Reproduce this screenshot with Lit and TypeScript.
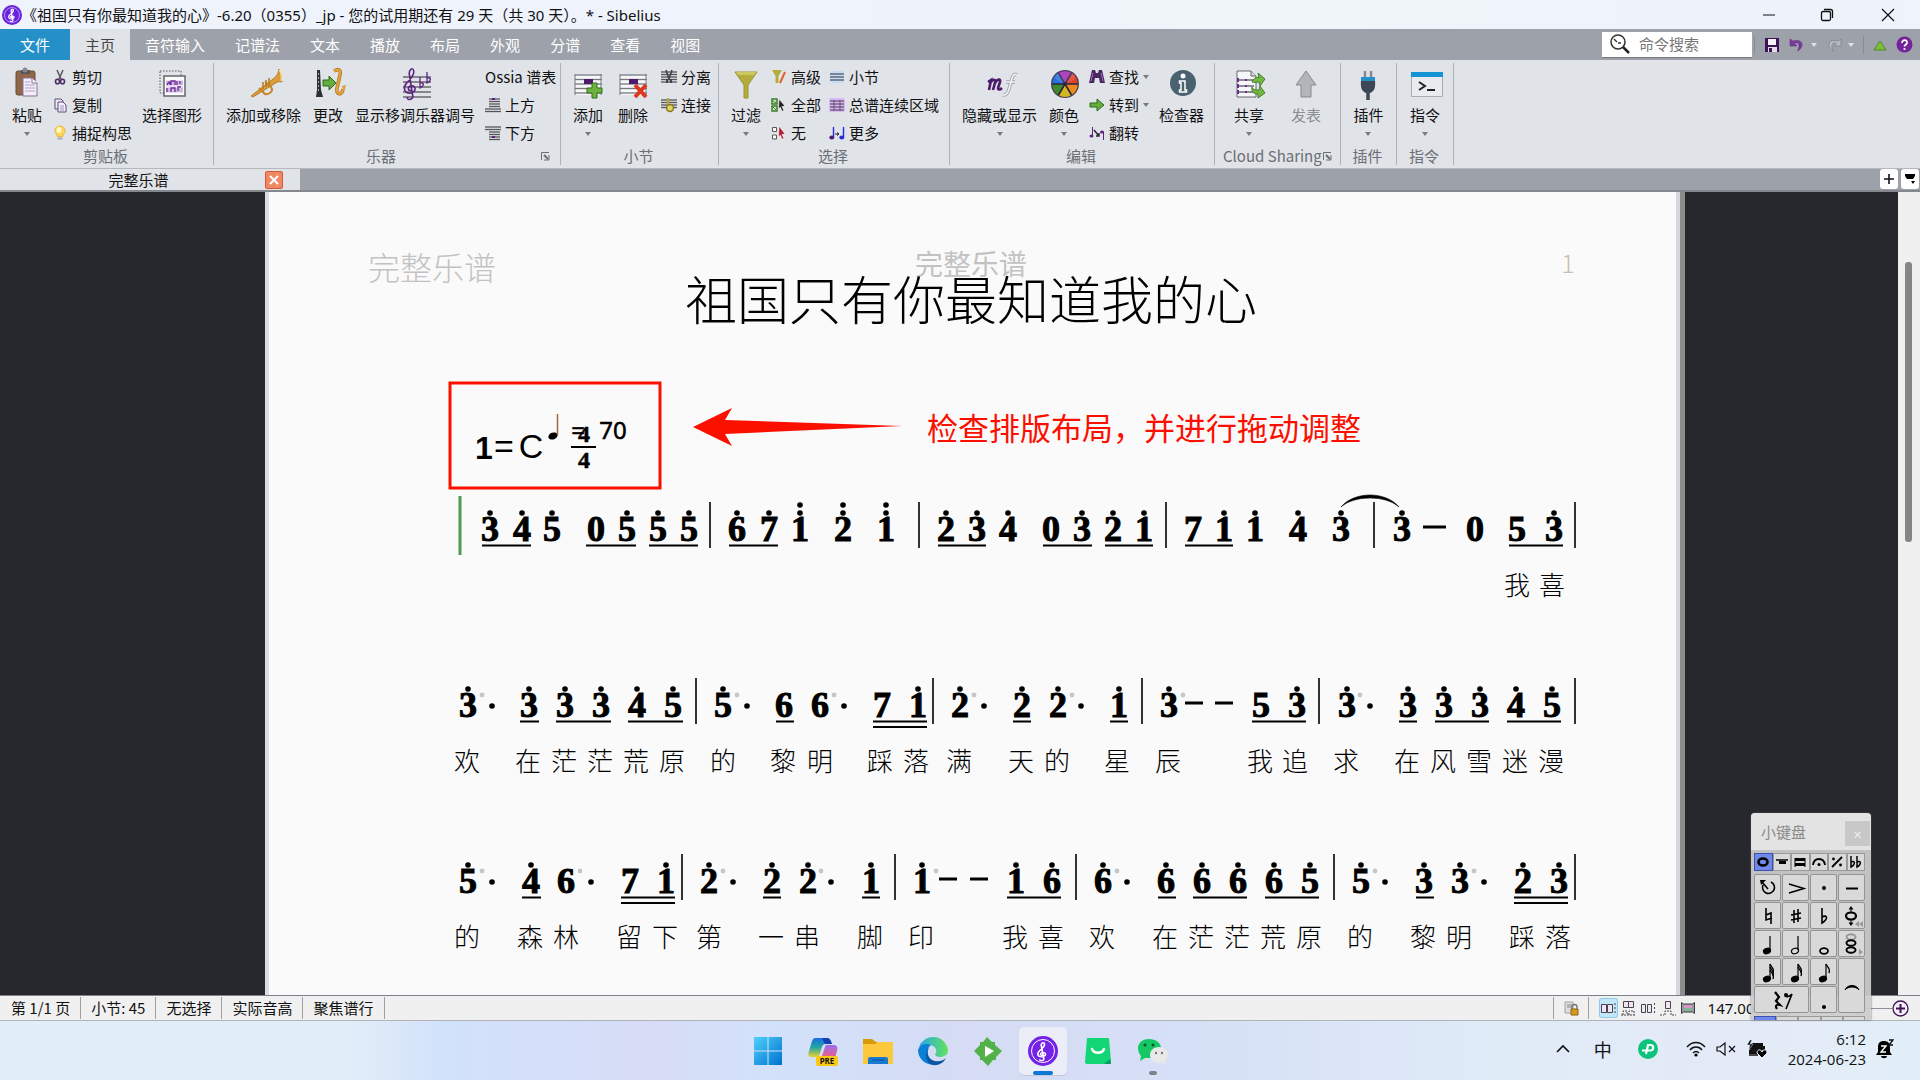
import { LitElement, html, svg, css, nothing } from "lit";
import type { TemplateResult } from "lit";
import { customElement, state } from "lit/decorators.js";
import { classMap } from "lit/directives/class-map.js";

const CLEF =
  "M10 30C6 30 6 25 10 24C15 23 17 31 10 33C2 34 1 26 5 21C9 16 14 12 13 6C12 1 8 4 8 9L12 37C12 42 5 42 6 38";

const icon = (w: number, h: number, body: unknown) =>
  html`<svg width=${w} height=${h} viewBox="0 0 ${w} ${h}" aria-hidden="true">${body}</svg>`;

const staff = (x: number, y: number, w: number, n: number, gap: number, color = "#55565c") =>
  Array.from({ length: n }, (_, i) => svg`<path d="M${x} ${y + i * gap}h${w}" stroke=${color} stroke-width="1.3" />`);

const plus = svg`<path d="M19 16h5v5h5v5h-5v5h-5v-5h-5v-5h5z" fill="#6fb23c" stroke="#2f6f1d" />`;

const ICONS: Record<string, TemplateResult> = {
  paste: icon(28, 32, svg`
    <rect x="3" y="4" width="19" height="24" rx="2" fill="#8f6748" stroke="#6b4a33" />
    <path d="M8 3h9v4H8z" fill="#55555c" /><circle cx="12" cy="3" r="2.5" fill="#88888f" />
    <path d="M10 11h9l5 5v13H10z" fill="#f2edf8" stroke="#8573a0" />
    <path d="M19 11v5h5" fill="#fff" stroke="#8573a0" />
    <path d="M12 15h5M12 18h10M12 21h10M12 24h10" stroke="#b49fc8" />`),
  cut: icon(16, 16, svg`
    <path d="M5 1l4 9M11 1L7 10" stroke="#55555c" stroke-width="1.5" />
    <ellipse cx="5.5" cy="12.5" rx="2" ry="2.3" fill="none" stroke="#4d2a63" stroke-width="1.6" />
    <ellipse cx="10.5" cy="12.5" rx="2" ry="2.3" fill="none" stroke="#4d2a63" stroke-width="1.6" />`),
  copy: icon(16, 16, svg`
    <path d="M3 2h6l2 2v8H3z" fill="#efeaf5" stroke="#5d4a78" />
    <path d="M6 5h5l3 3v7H6z" fill="#f6f2fb" stroke="#5d4a78" />
    <path d="M8 9h4M8 11h4M8 13h4" stroke="#8a78a8" stroke-width=".8" />`),
  idea: icon(16, 16, svg`
    <path d="M8 1a5 5 0 0 1 5 5c0 2-2 3-2.300 5.500H5.300C5 9 3 8 3 6a5 5 0 0 1 5-5z" fill="#fbd75a" stroke="#eeb53c" />
    <ellipse cx="7" cy="5" rx="2.500" ry="3" fill="#fff6c6" /><path d="M5.500 12.500h5v2h-5z" fill="#a9a9b0" />`),
  graphic: icon(30, 32, svg`
    <rect x="3" y="4" width="21" height="22" fill="none" stroke="#55565c" stroke-dasharray="1.500 1.500" />
    <rect x="7" y="9" width="21" height="20" fill="#fafafa" stroke="#65666c" stroke-width="1.500" />
    <rect x="9" y="13" width="17" height="13" fill="#e9dcf4" />
    <path d="M9 15h17M9 17h17M9 22h17M9 24h17" stroke="#a883c4" stroke-width=".8" />
    <path d="M10 18c2-4 3-4 3 0M14 18v-4h4v4M20 18v-4M23 17v-3M10 25v-4M14 25v-4h4v4M21 24v-4h3" stroke="#6b2f92" stroke-width="1.300" fill="none" />`),
  trumpet: icon(34, 32, svg`
    <path d="M2 29L24 12c4-3 5-5 6-10l3 13c-3-1-5 0-8 2L4 30z" fill="#dc9c38" stroke="#a96d17" stroke-width=".8" />
    <path d="M10 21l6 6c4 1 9-3 6-7l-6-5" fill="none" stroke="#c58524" stroke-width="2" />
    <path d="M14 15v7M17 13v7M20 11v7" stroke="#b5781e" stroke-width="1.500" />
    <path d="M30 3c2 2 3 8 2 11" stroke="#f6d48c" stroke-width="1.600" fill="none" />`),
  change: icon(34, 32, svg`
    <path d="M4 3h3l1 20 2 7H3l1-7z" fill="#2e2f34" /><path d="M5.500 6v19" stroke="#a5a6ac" stroke-dasharray="2 2" />
    <path d="M10 13h6V9l7 7-7 7v-4h-6z" fill="#67ad3d" stroke="#2d6b1c" />
    <path d="M21 4c6-3 7 0 6 4l-3 13c-1 7 5 8 6 1" fill="none" stroke="#b0721a" stroke-width="3.500" />
    <path d="M21 4c6-3 7 0 6 4l-3 13c-1 7 5 8 6 1" fill="none" stroke="#e5a63e" stroke-width="2" />
    <path d="M29 19l4-1-2 7z" fill="#dc9c38" />`),
  clef: icon(34, 36, svg`
    ${staff(3, 10, 28, 5, 5)}
    <path d=${CLEF} transform="translate(2 -1) scale(.9 .82)" fill="none" stroke="#5e2380" stroke-width="1.800" />
    <path d="M20 10v11c4-2 5-6 0-5M27 5v11c4-2 5-6 0-5" fill="none" stroke="#5e2380" stroke-width="1.300" />`),
  above: icon(16, 16, svg`${staff(4, 2, 11, 4, 2.5)}${staff(0, 12, 16, 2, 2.5)}<path d="M7 1h3v2H7z" fill="#5e2380" />`),
  below: icon(16, 16, svg`${staff(0, 2, 16, 2, 2.5)}${staff(4, 7, 11, 4, 2.5)}<path d="M7 11h3v2H7z" fill="#5e2380" />`),
  barAdd: icon(32, 32, svg`<path d="M2 7h27v21H2z" fill="#f6f6f8" />${staff(2, 8, 27, 5, 4.5, "#75767c")}<path d="M2 7v21M28 7v21" stroke="#75767c" /><path d="M11 12h9v5h-9z" fill="#4c1a6c" />${plus}`),
  barDel: icon(32, 32, svg`<path d="M2 7h27v21H2z" fill="#f6f6f8" />${staff(2, 8, 27, 5, 4.5, "#75767c")}<path d="M2 7v21M28 7v21" stroke="#75767c" /><path d="M11 12h9v5h-9z" fill="#4c1a6c" /><path d="M17 18l11 12M28 18L17 30" stroke="#dc3820" stroke-width="4" />`),
  split: icon(16, 16, svg`${staff(0, 3, 16, 5, 2.5)}<path d="M5 1l3 9 3-9" stroke="#44454b" stroke-width="1.600" fill="none" /><path d="M6 10v4M10 10v4" stroke="#44454b" stroke-width="2" />`),
  join: icon(16, 16, svg`${staff(0, 3, 16, 4, 2.5)}<path d="M7 1v8" stroke="#b9a63a" stroke-width="2.500" /><circle cx="9" cy="11" r="3.500" fill="#ded06a" stroke="#8b7a1d" stroke-width="1.500" />`),
  filter: icon(28, 32, svg`<path d="M3 5h22L16 18v13h-4V18z" fill="#b4ad3e" stroke="#9a9330" /><path d="M4 5h20l-2 3H6z" fill="#cec95e" />`),
  advanced: icon(16, 16, svg`<path d="M1 1h10L7.500 7v7h-3V7z" fill="#b4ad3e" /><path d="M14 3L9 14" stroke="#e2602b" stroke-width="2" />`),
  all: icon(16, 16, svg`<path d="M1 2h5v5H1zM1 9h5v5H1z" fill="#cfe8c2" stroke="#3b7f2b" stroke-width="1.500" /><path d="M8 2l6 7-3 .5 2 4-2 .8-1.600-4L7.500 12z" fill="#222" stroke="#fff" stroke-width=".6" /><path d="M2 10l3 3M2 4l3 2" stroke="#3b7f2b" />`),
  none: icon(16, 16, svg`<path d="M1.500 2.500h4v4h-4zM1.500 10h4v4h-4z" fill="#fff" stroke="#55565c" /><path d="M8 1l6 8-3 .5 2 4-2 .8-1.600-4L7.500 12z" fill="#b01d32" stroke="#fff" stroke-width=".6" />`),
  bar: icon(16, 16, svg`<rect x="1" y="2" width="14" height="12" rx="2" fill="#c4dcfa" />${staff(1, 5, 14, 3, 3)}`),
  system: icon(16, 16, svg`<rect x="0" y="1" width="16" height="14" rx="2" fill="#d9b9f2" />${staff(1, 4, 14, 4, 3, "#6b5478")}<path d="M5 3v11M11 3v11" stroke="#6b5478" />`),
  more: icon(16, 16, svg`<path d="M4.500 12V2M14.500 12V2" stroke="#2a2ae0" stroke-width="1.400" /><ellipse cx="2.800" cy="12.500" rx="2.500" ry="2" fill="#4d1d78" /><ellipse cx="12.800" cy="12.500" rx="2.500" ry="2" fill="#2a2ae0" /><path d="M6 9h4M8 7.500L10 9 8 10.500" stroke="#222" fill="none" />`),
  hide: icon(36, 32, svg`
    <path d="M3 15l3-2-2 10M6 15c3-4 5-2 4 1l-2 7M10 16c3-5 6-4 5-1l-2 6c0 2 2 2 4 0" fill="none" stroke="#4c1a6c" stroke-width="2.600" />
    <path d="M18 28c5 1 6-6 8-13 1-6 3-9 6-7M21 15h9" fill="none" stroke="#a5a6ac" stroke-width="3.500" /><path d="M18 28c5 1 6-6 8-13 1-6 3-9 6-7M21 15h9" fill="none" stroke="#f0f0f3" stroke-width="1.600" />`),
  color: icon(32, 32, svg`
    <circle cx="16" cy="17" r="14" fill="#4a3f58" />
    <path d="M16 17L9.500 6A12.700 12.700 0 0 1 22.500 6z" fill="#a32bb8" /><path d="M16 17L22.500 6A12.700 12.700 0 0 1 28.700 17z" fill="#e0402c" />
    <path d="M16 17h12.700a12.700 12.700 0 0 1-6.200 11z" fill="#ee8a1b" /><path d="M16 17l6.500 11a12.700 12.700 0 0 1-13 0z" fill="#d2b81c" />
    <path d="M16 17L9.500 28A12.700 12.700 0 0 1 3.300 17z" fill="#3c8a2c" /><path d="M16 17H3.300A12.700 12.700 0 0 1 9.500 6z" fill="#2a6fe0" />
    <path d="M9.500 6l13 22M22.500 6l-13 22M3 17h26" stroke="#2d2340" stroke-width="1.600" />
    <ellipse cx="16" cy="10" rx="10" ry="5.500" fill="#fff" opacity=".12" />`),
  find: icon(16, 16, svg`<path d="M3 1h3l1 3h2l1-3h3l3 13h-5l-1-5H6l-1 5H0z" fill="#4c2563" /><path d="M2 12l2-8M12 4l2 8" stroke="#9a78b4" />`),
  goto: icon(16, 16, svg`<path d="M1 6h7V2l7 6-7 6v-4H1z" fill="#67ad3d" stroke="#2d6b1c" />`),
  flip: icon(16, 16, svg`<path d="M3.500 2v9M14.500 7v8" stroke="#5e2380" /><ellipse cx="2.500" cy="11" rx="2" ry="1.600" fill="#5e2380" /><ellipse cx="13" cy="7" rx="2" ry="1.600" fill="#5e2380" /><path d="M5 5l5 6M10 8v3H7" stroke="#222" fill="none" stroke-width="1.400" />`),
  inspector: icon(32, 32, svg`<circle cx="16" cy="16" r="13" fill="#4a6270" /><circle cx="16" cy="9" r="2.500" fill="#fff" /><path d="M12.500 14h5.500v9h1.500v2h-7v-2h1.500v-7h-1.500z" fill="#4a6270" stroke="#fff" stroke-width="1.500" />`),
  share: icon(34, 32, svg`
    <path d="M3 4h14l5 5v21H3z" fill="#f7f6fa" stroke="#66676e" /><path d="M17 4v5h5" fill="#ddd" stroke="#66676e" />
    <path d="M5 13h15M5 19h15M5 25h15" stroke="#8b8c94" stroke-width="2" /><path d="M4 11v4M4 17v4M4 23v4M12 12v2M12 18v2M12 24v2" stroke="#6b2a92" stroke-width="2" />
    <path d="M18 15c2-5 5-5 7-4l-1-5 7 6-5 7-1-4c-3 0-5 1-7 0z" fill="#72b840" stroke="#2d6b1c" stroke-width=".8" />
    <path d="M18 20c1 3 4 3 7 3l1-4 5 7-7 5v-4c-4 0-7-2-6-7z" fill="#72b840" stroke="#2d6b1c" stroke-width=".8" />`),
  publish: icon(28, 32, svg`<path d="M14 4l10 14h-5v12H9V18H4z" fill="#b4b5b9" stroke="#88898e" />`),
  plugin: icon(24, 34, svg`<path d="M9 4v7M15 4v7" stroke="#8a8b92" stroke-width="2.500" /><path d="M5 10h14v4H5z" fill="#2590c8" /><path d="M5 14h14c1 8-2 11-5 12h-4c-3-1-6-4-5-12z" fill="#3c4654" /><path d="M12 25v8" stroke="#3c4654" stroke-width="3.500" />`),
  command: icon(34, 32, svg`<path d="M1.500 5.500h31v24h-31z" fill="#e9ebee" stroke="#a9acb2" /><path d="M1 5h32v5H1z" fill="#1494d4" /><path d="M9 15l6 4-6 4M17 23h8" fill="none" stroke="#222" stroke-width="2" />`),
  launcher: icon(10, 10, svg`<path d="M1.500 9V1.500H9M9 4v5H4" fill="none" stroke="#6b6e75" /><path d="M4 4l4 4" stroke="#6b6e75" stroke-width="2" />`),
  search: icon(22, 22, svg`<circle cx="9" cy="9" r="7" fill="none" stroke="#333" stroke-width="1.500" /><path d="M14 14l6 6" stroke="#222" stroke-width="2.500" /><path d="M5 6l3 3M9 10h3" stroke="#333" stroke-width="1.400" />`),
  save: icon(16, 16, svg`<path d="M1 1h14v14H1z" fill="#3d1455" /><path d="M4 2h8v6H4z" fill="#f4f0f8" /><path d="M4 10h9v5H4z" fill="#e3dcea" /><path d="M5 11h3v4H5z" fill="#3d1455" />`),
  undo: icon(16, 16, svg`<path d="M1 2v7h7L5.500 6.500C9 4 12 8 8.500 14 16 10 14 1 4 4z" fill="#7a3a9c" stroke="#5e2380" stroke-width=".5" />`),
  redo: icon(16, 16, svg`<path d="M15 2v7H8l2.500-2.500C7 4 4 8 7.500 14 0 10 2 1 12 4z" fill="#b9bbc1" stroke="#7f828a" stroke-width=".8" />`),
  up: icon(14, 14, svg`<path d="M7 3l6 9H1z" fill="#7cbf3f" stroke="#4c8a1f" />`),
  help: icon(17, 17, svg`<circle cx="8.500" cy="8.500" r="8" fill="#74249a" /><path d="M6 7c0-4 5.500-3.500 5 0-.3 1.500-2.500 1.500-2.500 3.500" fill="none" stroke="#fff" stroke-width="1.800" /><circle cx="8.500" cy="13" r="1.100" fill="#fff" />`),
  appLogo: icon(20, 20, svg`<circle cx="10" cy="10" r="10" fill="#6a22dd" /><circle cx="10" cy="10" r="7.500" fill="none" stroke="#c9a8fa" stroke-width=".8" /><path d=${CLEF} transform="translate(5.500 3) scale(.45 .33)" fill="none" stroke="#fff" stroke-width="3" />`),
  minimize: icon(14, 14, svg`<path d="M1 7h12" stroke="#111" />`),
  restore: icon(14, 14, svg`<rect x="1.500" y="3.500" width="9" height="9" rx="1.500" fill="none" stroke="#111" stroke-width="1.300" /><path d="M4 1.500h6.500a2 2 0 0 1 2 2V10" fill="none" stroke="#111" stroke-width="1.300" />`),
  close: icon(14, 14, svg`<path d="M1 1l12 12M13 1L1 13" stroke="#111" stroke-width="1.200" />`),
  lock: icon(16, 16, svg`<path d="M2 2h8v11H2z" fill="#dcdce2" stroke="#a0a0a8" /><path d="M4 5h5M4 7h5" stroke="#888" /><path d="M9 9V7a2.500 2.500 0 0 1 5 0v2" fill="none" stroke="#777" stroke-width="1.400" /><path d="M8 9h7v6H8z" fill="#d99a1c" stroke="#8a6213" />`),
};

const VIEW_ICONS = [
  icon(16, 16, svg`<path d="M1.500 4.500h5v8h-5zM7.500 4.500h5v8h-5z" fill="#f3e4f5" stroke="#44454b" /><path d="M15 3v11" stroke="#44454b" stroke-dasharray="2 2" />`),
  icon(16, 16, svg`<path d="M3.500 1.500h5v6h-5zM8.500 1.500h5v6h-5z" fill="#f3e4f5" stroke="#44454b" /><path d="M3 15v-4h4v4M9 15v-4h5v4M1 15h14" fill="none" stroke="#44454b" stroke-dasharray="2 1" />`),
  icon(16, 16, svg`<path d="M1.500 4.500h4v8h-4zM7.500 4.500h4v8h-4z" fill="#f3e4f5" stroke="#44454b" /><path d="M14.500 3v11" stroke="#44454b" stroke-dasharray="2 2" />`),
  icon(16, 16, svg`<path d="M5.500 1.500h5v7h-5z" fill="#f3e4f5" stroke="#44454b" /><path d="M5 15v-4h6v4M0 15h4M12 15h4" fill="none" stroke="#44454b" stroke-dasharray="2 1" />`),
  icon(16, 16, svg`<path d="M1.500 2.500l2 1.500h9l2-1.500v11l-2-1.500h-9l-2 1.500z" fill="#9a9aa2" stroke="#3a3b40" /><path d="M4 5h8v3H4z" fill="#d895c8" /><path d="M4 8h8v3H4z" fill="#7fb79a" />`),
];

const note = (x: number, filled: boolean, flags: number) => svg`
  <ellipse cx=${x} cy="20" rx="3.600" ry="2.600" transform="rotate(-20 ${x} 20)" fill=${filled ? "#000" : "none"} stroke="#000" stroke-width="1.200" />
  <path d="M${x + 3} 19V5" stroke="#000" stroke-width="1.200" />
  ${Array.from({ length: flags }, (_, i) => svg`<path d="M${x + 3} ${5 + i * 3}c1 3 5 4 3 9" fill="none" stroke="#000" stroke-width="1.300" />`)}`;

const whole = (x: number, y: number, c = "#000") =>
  svg`<ellipse cx=${x} cy=${y} rx="4.500" ry="2.800" fill="none" stroke=${c} stroke-width="2" />`;

const PAD_TABS: [string, TemplateResult][] = [
  ["常用音符", icon(16, 16, svg`<ellipse cx="8" cy="8" rx="4.500" ry="3.500" fill="none" stroke="#000" stroke-width="2.600" />`)],
  ["更多音符", icon(16, 16, svg`<path d="M2 6h12M5 8h7" stroke="#000" stroke-width="1.500" /><path d="M5 7h7v3H5z" />`)],
  ["符杠", icon(16, 16, svg`<path d="M3 13V4M13 13V4" stroke="#000" /><path d="M3 4h10v3H3zM3 9h10v3H3z" />`)],
  ["奏法", icon(16, 16, svg`<path d="M2 11c1-8 11-8 12 0" fill="none" stroke="#000" stroke-width="1.800" /><circle cx="8" cy="10.500" r="1.500" />`)],
  ["爵士奏法", icon(16, 16, svg`<path d="M3 13L13 3" stroke="#000" stroke-width="1.800" /><circle cx="4.500" cy="5" r="1.400" /><circle cx="11.500" cy="11" r="1.400" />`)],
  ["变音记号", icon(16, 16, svg`<path d="M3 2v11c4-2 5-7 0-5M9 2v11c4-2 5-7 0-5" fill="none" stroke="#000" stroke-width="1.500" />`)],
];

const PAD_KEYS: { name: string; cls?: string; art: TemplateResult }[] = [
  { name: "返回", art: icon(26, 26, svg`<path d="M16 7a6 6 0 1 1-8 3M13 14L7 7" fill="none" stroke="#000" stroke-width="1.600" /><path d="M5 5h6l-5 5z" />`) },
  { name: "重音", art: icon(26, 26, svg`<path d="M6 9l15 4.500L6 18" fill="none" stroke="#000" stroke-width="1.500" />`) },
  { name: "断奏", art: icon(26, 26, svg`<circle cx="13" cy="13" r="2" />`) },
  { name: "保持音", art: icon(26, 26, svg`<path d="M7 13.500h12" stroke="#000" stroke-width="2" />`) },
  { name: "还原", art: icon(26, 26, svg`<path d="M11 5v12l6-2M16 21V10l-5 2" fill="none" stroke="#000" stroke-width="1.600" />`) },
  { name: "升号", art: icon(26, 26, svg`<path d="M11 7v13M15 6v13M8 12l10-2M8 17l10-2" fill="none" stroke="#000" stroke-width="1.600" />`) },
  { name: "降号", art: icon(26, 26, svg`<path d="M11 5v15c6-4 6-9 0-6" fill="none" stroke="#000" stroke-width="1.600" />`) },
  { name: "移动音符", art: icon(26, 26, svg`<ellipse cx="12" cy="13" rx="5" ry="3.500" fill="none" stroke="#000" stroke-width="2.200" /><path d="M12 9V5M12 17v4" stroke="#000" /><path d="M9.500 6.500L12 3l2.500 3.500zM9.500 19.500L12 23l2.500-3.500z" /><path d="M20 18v6l-4-3zM24 18v6l-4-3z" fill="#999" />`) },
  { name: "四分音符", art: icon(26, 26, note(12, true, 0)) },
  { name: "二分音符", art: icon(26, 26, note(12, false, 0)) },
  { name: "全音符", art: icon(26, 26, svg`<ellipse cx="13" cy="20" rx="4" ry="2.800" fill="none" stroke="#000" stroke-width="1.800" />`) },
  { name: "和弦", art: icon(26, 26, svg`${whole(12, 6, "#999")}${whole(12, 12)}${whole(12, 19)}<path d="M20 18l4 3-4 3z" fill="#999" />`) },
  { name: "三十二分音符", art: icon(26, 26, note(12, true, 3)) },
  { name: "十六分音符", art: icon(26, 26, note(12, true, 2)) },
  { name: "八分音符", art: icon(26, 26, note(12, true, 1)) },
  { name: "连音线", cls: "tall", art: icon(26, 26, svg`<path d="M6 17c2-6 12-6 14 0-3-4-11-4-14 0z" stroke="#000" />`) },
  { name: "休止符", cls: "broad", art: icon(34, 26, svg`<path d="M10 5l4 5-3 4 4 4c-4-1-5 1-3 4" fill="none" stroke="#000" stroke-width="2.200" /><circle cx="21" cy="8" r="2" /><path d="M20 9c3 2 5 0 7-2l-6 15" fill="none" stroke="#000" stroke-width="1.600" />`) },
  { name: "附点", art: icon(26, 26, svg`<circle cx="13" cy="20" r="2" />`) },
];

type Big = { kind: "big"; icon: string; label: string; menu?: boolean; disabled?: boolean };
type Small = { kind: "small"; items: { icon?: string; label: string; menu?: boolean }[] };
type Group = { label: string; cls?: string; launcher?: boolean; parts: (Big | Small)[] };

const big = (iconName: string, label: string, menu = false, disabled = false): Big =>
  ({ kind: "big", icon: iconName, label, menu, disabled });

const GROUPS: Group[] = [
  { label: "剪贴板", parts: [
    big("paste", "粘贴", true),
    { kind: "small", items: [{ icon: "cut", label: "剪切" }, { icon: "copy", label: "复制" }, { icon: "idea", label: "捕捉构思" }] },
    big("graphic", "选择图形")] },
  { label: "乐器", launcher: true, parts: [
    big("trumpet", "添加或移除"), big("change", "更改"), big("clef", "显示移调乐器调号"),
    { kind: "small", items: [{ label: "Ossia 谱表" }, { icon: "above", label: "上方" }, { icon: "below", label: "下方" }] }] },
  { label: "小节", cls: "roomy", parts: [
    big("barAdd", "添加", true), big("barDel", "删除"),
    { kind: "small", items: [{ icon: "split", label: "分离" }, { icon: "join", label: "连接" }] }] },
  { label: "选择", parts: [
    big("filter", "过滤", true),
    { kind: "small", items: [{ icon: "advanced", label: "高级" }, { icon: "all", label: "全部" }, { icon: "none", label: "无" }] },
    { kind: "small", items: [{ icon: "bar", label: "小节" }, { icon: "system", label: "总谱连续区域" }, { icon: "more", label: "更多" }] }] },
  { label: "编辑", parts: [
    big("hide", "隐藏或显示", true), big("color", "颜色", true),
    { kind: "small", items: [{ icon: "find", label: "查找", menu: true }, { icon: "goto", label: "转到", menu: true }, { icon: "flip", label: "翻转" }] },
    big("inspector", "检查器")] },
  { label: "Cloud Sharing", cls: "wide", launcher: true, parts: [big("share", "共享", true), big("publish", "发表", false, true)] },
  { label: "插件", cls: "single", parts: [big("plugin", "插件", true)] },
  { label: "指令", cls: "single", parts: [big("command", "指令", true)] },
];

const TABS = ["文件", "主页", "音符输入", "记谱法", "文本", "播放", "布局", "外观", "分谱", "查看", "视图"];

/* Score data: [x, digit, octave dots]; dots are augmentation dots, dashes are held beats. */
type System = {
  base: number;
  notes: [number, string, number?][];
  dots: number[];
  ghosts: number[];
  dashes: [number, number][];
  bars: number[];
  beams: [number, number, number?][];
  lyrics: [number, string][];
};

const SYSTEMS: System[] = [
  {
    base: 541,
    notes: [[490, "3", 1], [522, "4", 1], [552, "5", 1], [596, "0"], [627, "5", 1], [658, "5", 1], [689, "5", 1],
      [737, "6", 1], [769, "7", 1], [800, "1", 2], [843, "2", 2], [886, "1", 2],
      [946, "2", 1], [977, "3", 1], [1008, "4", 1], [1051, "0"], [1082, "3", 1], [1113, "2", 1], [1144, "1", 1],
      [1193, "7"], [1224, "1", 1], [1255, "1", 1], [1298, "4", 1], [1341, "3", 1],
      [1402, "3", 1], [1475, "0"], [1517, "5"], [1554, "3", 1]],
    dots: [], ghosts: [], dashes: [[1423, 1446]],
    bars: [710, 919, 1166, 1374, 1575],
    beams: [[482, 531], [586, 636], [649, 698], [729, 778], [938, 986], [1043, 1092], [1105, 1153], [1185, 1233], [1509, 1563]],
    lyrics: [[1517, "我"], [1552, "喜"]],
  },
  {
    base: 717,
    notes: [[468, "3", 1], [529, "3", 1], [565, "3", 1], [601, "3", 1], [637, "4", 1], [673, "5", 1],
      [723, "5", 1], [784, "6"], [820, "6"], [882, "7"], [918, "1", 1],
      [960, "2", 1], [1022, "2", 1], [1058, "2", 1], [1119, "1", 1],
      [1169, "3", 1], [1261, "5"], [1297, "3", 1],
      [1347, "3", 1], [1408, "3", 1], [1444, "3", 1], [1480, "3", 1], [1516, "4", 1], [1552, "5", 1]],
    dots: [492, 747, 844, 984, 1081, 1370],
    ghosts: [482, 737, 834, 974, 1072, 1183, 1360],
    dashes: [[1185, 1203], [1215, 1233]],
    bars: [696, 933, 1142, 1319, 1575],
    beams: [[520, 539], [556, 611], [628, 683], [776, 794], [873, 927, 2], [1013, 1031], [1110, 1128], [1252, 1306], [1399, 1417], [1435, 1489], [1507, 1561]],
    lyrics: [[467, "欢"], [528, "在"], [564, "茫"], [600, "茫"], [636, "荒"], [672, "原"], [723, "的"], [783, "黎"], [820, "明"], [880, "踩"], [916, "落"], [959, "满"], [1021, "天"], [1057, "的"], [1117, "星"], [1168, "辰"], [1260, "我"], [1295, "追"], [1346, "求"], [1407, "在"], [1443, "风"], [1479, "雪"], [1515, "迷"], [1551, "漫"]],
  },
  {
    base: 893,
    notes: [[468, "5", 1], [531, "4", 1], [566, "6"], [630, "7"], [666, "1", 1],
      [709, "2", 1], [772, "2", 1], [808, "2", 1], [871, "1", 1],
      [922, "1", 1], [1016, "1", 1], [1052, "6", 1],
      [1103, "6", 1], [1166, "6", 1], [1202, "6", 1], [1238, "6", 1], [1274, "6", 1], [1310, "5", 1],
      [1361, "5", 1], [1424, "3", 1], [1460, "3", 1], [1523, "2", 1], [1559, "3", 1]],
    dots: [492, 591, 733, 831, 1127, 1385, 1484],
    ghosts: [482, 580, 723, 821, 936, 1117, 1375, 1474],
    dashes: [[939, 957], [970, 988]],
    bars: [682, 895, 1076, 1334, 1575],
    beams: [[522, 541], [621, 675, 2], [763, 781], [862, 880], [1007, 1061], [1158, 1176], [1193, 1247], [1265, 1319], [1416, 1434], [1514, 1568, 2]],
    lyrics: [[467, "的"], [530, "森"], [566, "林"], [629, "留"], [665, "下"], [709, "第"], [771, "一"], [807, "串"], [870, "脚"], [921, "印"], [1015, "我"], [1051, "喜"], [1102, "欢"], [1165, "在"], [1201, "茫"], [1237, "茫"], [1273, "荒"], [1309, "原"], [1360, "的"], [1423, "黎"], [1459, "明"], [1522, "踩"], [1558, "落"]],
  },
];

@customElement("score-sheet")
export class ScoreSheet extends LitElement {
  static styles = css`
    :host { display: block; background: #fafafa; }
    svg { display: block; }
    text { font-family: "Noto Sans CJK SC", "Noto Sans", sans-serif; text-anchor: middle; }
    .digit { font: bold 36px "Liberation Serif", serif; stroke: #000; stroke-width: 1px; }
    .lyric { font-size: 26px; font-weight: 300; }
    .title { font-size: 52px; font-weight: 300; }
    .mark { fill: #c2c2c2; font-size: 32px; font-weight: 300; }
    .mark.mid { font-size: 28px; font-weight: 400; }
    .mark.page { font-size: 25px; fill: #c9bdb4; }
    .callout { fill: #fb1000; font-size: 31px; text-anchor: start; }
    .key { font: 34px "Liberation Sans", sans-serif; }
    .key.one { font: bold 32px "Liberation Sans", sans-serif; }
    .tempo { font: 24px "Noto Sans", sans-serif; stroke: #000; stroke-width: .5px; }
    .meter { font: bold 24px "Liberation Serif", serif; stroke: #000; stroke-width: .5px; }
  `;

  private system(s: System) {
    return svg`<g>
      ${s.notes.map(([x, d, n = 0]) => svg`
        <text class="digit" x=${x} y=${s.base}>${d}</text>
        ${Array.from({ length: n }, (_, i) => svg`<circle cx=${x} cy=${s.base - 28 - i * 8} r="2.800" />`)}`)}
      ${s.dots.map((x) => svg`<circle cx=${x} cy=${s.base - 11} r="2.800" />`)}
      ${s.ghosts.map((x) => svg`<circle cx=${x} cy=${s.base - 22} r="2.400" fill="#c6c6c8" />`)}
      ${s.dashes.map(([a, b]) => svg`<path d="M${a} ${s.base - 14}H${b}" stroke="#000" stroke-width="3" />`)}
      ${s.bars.map((x) => svg`<path d="M${x} ${s.base - 39}v46" stroke="#000" stroke-width="1.600" />`)}
      ${s.beams.map(([a, b, n = 1]) => Array.from({ length: n }, (_, i) =>
        svg`<path d="M${a} ${s.base + 4.5 + i * 5.5}H${b}" stroke="#000" stroke-width="2" />`))}
      ${s.lyrics.map(([x, t]) => svg`<text class="lyric" x=${x} y=${s.base + 54}>${t}</text>`)}
    </g>`;
  }

  render() {
    return html`<svg width="1407" height="804" viewBox="269 192 1407 804" role="img" aria-label="祖国只有你最知道我的心">
      <text class="mark" x="432" y="280">完整乐谱</text>
      <text class="mark mid" x="971" y="275">完整乐谱</text>
      <text class="mark page" x="1568" y="273">1</text>
      <text class="title" x="971" y="320">祖国只有你最知道我的心</text>
      <rect x="450" y="383" width="210" height="105" fill="none" stroke="#fb1000" stroke-width="3" />
      <text class="key one" x="484" y="459">1</text>
      <text class="key" x="504" y="458">=</text>
      <text class="key" x="531" y="458">C</text>
      <ellipse cx="553" cy="436" rx="4.800" ry="3.400" transform="rotate(-20 553 436)" />
      <path d="M557.500 435V414" stroke="#9c6a38" stroke-width="1.500" />
      <text class="tempo" x="578" y="439">=</text>
      <text class="meter" x="584" y="442">4</text>
      <path d="M571 447h25" stroke="#000" stroke-width="2" />
      <text class="meter" x="584" y="468">4</text>
      <text class="tempo" x="613" y="439">70</text>
      <path d="M693 427l39-19-7 12 177 6-177 8 7 12z" fill="#fb1000" />
      <text class="callout" x="927" y="440">检查排版布局，并进行拖动调整</text>
      <path d="M460 496v59" stroke="#4f9a54" stroke-width="3" />
      <path d="M1341 507C1354 491 1386 491 1399 507C1386 495 1354 495 1341 507z" stroke="#000" stroke-width=".6" />
      ${SYSTEMS.map((s) => this.system(s))}
    </svg>`;
  }
}

@customElement("note-keypad")
export class NoteKeypad extends LitElement {
  static styles = css`
    :host { display: flex; flex-direction: column; overflow: hidden; border-radius: 4px 4px 0 0; background: rgba(204, 204, 204, 0.94); box-shadow: 0 0 2px #555; }
    header { display: flex; flex: none; align-items: center; justify-content: space-between; height: 37px; padding: 0 1px 0 10px; background: rgba(228, 228, 228, 0.96); color: #8a8a8a; font-size: 15px; }
    header button { width: 25px; height: 25px; margin-top: 4px; padding: 0; border: 0; background: #c8c8c8; color: #eee; font: 15px "Noto Sans", sans-serif; }
    button { box-sizing: border-box; display: flex; align-items: center; justify-content: center; overflow: hidden; }
    .tabs { display: grid; flex: none; grid-template-columns: repeat(6, 1fr); margin: 3px 6px 0 3px; }
    .tabs button { height: 18px; padding: 0; border: 1px solid #999; background: rgba(218, 218, 218, 0.94); }
    .tabs .on { background: #7088ea; border-color: #3d50b0; }
    .keys { display: grid; flex: none; grid-template-columns: repeat(4, 1fr); grid-auto-rows: 27px; gap: 1px; margin: 3px 6px 3px 3px; }
    .keys button { padding: 0; border: 1px solid #949494; border-radius: 2px; background: rgba(218, 218, 218, 0.94); }
    .tall { grid-row: span 2; }
    .broad { grid-column: span 2; }
    .tabs.next { grid-template-columns: repeat(5, 1fr); margin-top: 0; }
    svg { flex: none; }
  `;

  render() {
    return html`
      <header><span>小键盘</span><button aria-label="关闭小键盘">×</button></header>
      <div class="tabs">${PAD_TABS.map(([n, art], i) => html`<button class=${i ? "" : "on"} aria-label=${n}>${art}</button>`)}</div>
      <div class="keys">${PAD_KEYS.map((k) => html`<button class=${k.cls ?? ""} aria-label=${k.name}>${k.art}</button>`)}</div>
      <div class="tabs next">${[1, 2, 3, 4, 5].map((n) => html`<button class=${n > 1 ? "" : "on"} aria-label="声部 ${n}"></button>`)}</div>
    `;
  }
}

const TASKS: { name: string; cls?: string; art: TemplateResult }[] = [
  { name: "开始", art: html`<svg width="30" height="30" viewBox="0 0 30 30"><defs><linearGradient id="w" x1="0" y1="0" x2="1" y2="1"><stop offset="0" stop-color="#4fd0fb" /><stop offset="1" stop-color="#0072cf" /></linearGradient></defs><path d="M1 1h13.500v13.500H1zM15.500 1H29v13.500H15.500zM1 15.500h13.500V29H1zM15.500 15.500H29V29H15.500z" fill="url(#w)" /></svg>` },
  { name: "Copilot", art: html`<svg width="30" height="30" viewBox="0 0 30 30"><defs><linearGradient id="a" x1="0" y1="0" x2="0" y2="1"><stop offset="0" stop-color="#1a6fe0" /><stop offset=".5" stop-color="#23a6a0" /><stop offset="1" stop-color="#f0d02c" /></linearGradient><linearGradient id="b" x1="0" y1="0" x2="0" y2="1"><stop offset="0" stop-color="#9a6cf0" /><stop offset="1" stop-color="#f2607a" /></linearGradient></defs><path d="M7 2h12c3 0 4 3 5 6h-6c-3 0-4 2-5 6l-1 4c-1 2-2 3-4 3H3c-3 0-3-3-2-6L4 5c1-2 2-3 3-3z" fill="url(#a)" /><path d="M14 2h5c3 0 4 3 5 6h-6c-2 0-3-4-4-6z" fill="#1340b8" /><path d="M18 9h8c3 0 4 3 3 6l-2 7H12c3-1 4-11 6-13z" fill="url(#b)" /><rect x="8" y="20" width="22" height="10" rx="2" fill="#fbc811" /><text x="19" y="28" text-anchor="middle" font-family="Noto Sans, sans-serif" font-size="8" font-weight="bold" fill="#111">PRE</text></svg>` },
  { name: "文件资源管理器", art: html`<svg width="30" height="30" viewBox="0 0 30 30"><path d="M0 3h9l4 3h17v8H0z" fill="#d99a0a" /><path d="M0 8h12l3-2h15v21a1 1 0 0 1-1 1H0z" fill="#fdc93c" /><path d="M5 28v-5a2 2 0 0 1 2-2h16a2 2 0 0 1 2 2v5z" fill="#1779cf" /><path d="M9 24h12" stroke="#0b4f94" /></svg>` },
  { name: "Microsoft Edge", art: html`<svg width="30" height="30" viewBox="0 0 30 30"><defs><linearGradient id="e"><stop offset="0" stop-color="#2aa7e8" /><stop offset="1" stop-color="#62e35c" /></linearGradient></defs><path d="M1 11A15 15 0 0 1 30 14c0 5-4 7-8 7-3 0-5-1-5-3 2-1 3-8-6-9-5 0-8 0-10 2z" fill="url(#e)" /><path d="M0 15C1 8 8 7 13 9c-5 3-6 16 9 18A15 15 0 0 1 0 15z" fill="#0a7fd6" /><path d="M12 11c-4 3-4 12 5 14 5 1 9-1 11-3-4 9-20 11-20-3 0-3 1-6 4-8z" fill="#0a55a4" /></svg>` },
  { name: "播放器", art: html`<svg width="30" height="30" viewBox="0 0 30 30"><path d="M14 1l5 5h3v3l7 6-6 6v3h-3l-5 6-6-6H7v-3l-6-6 6-6V6h3z" fill="#52b148" /><path d="M12 10l9 5-9 6z" fill="#fff" /></svg>` },
  { name: "Sibelius", cls: "active", art: html`<svg width="30" height="30" viewBox="0 0 30 30"><circle cx="15" cy="15" r="15" fill="#7322e6" /><circle cx="15" cy="15" r="11.500" fill="none" stroke="#fff" /><path d=${CLEF} transform="translate(8 5) scale(.65 .48)" fill="none" stroke="#fff" stroke-width="2.600" /></svg>` },
  { name: "应用商店", art: html`<svg width="30" height="30" viewBox="0 0 30 30"><path d="M4 2h22l2 24a2 2 0 0 1-2 2H4a2 2 0 0 1-2-2z" fill="#12d576" /><path d="M27 23l1 5h-7z" fill="#0a9a60" /><path d="M9 13c2 5 10 5 12 0" fill="none" stroke="#fff" stroke-width="2.500" stroke-linecap="round" /></svg>` },
  { name: "微信", cls: "running", art: html`<svg width="30" height="30" viewBox="0 0 30 30"><path d="M11 3c7 0 12 4 12 9s-5 10-12 10l-4 0-5 3 1-5C-4 11 2 3 11 3z" fill="#14c963" /><circle cx="7" cy="9" r="1.500" fill="#14532d" /><circle cx="15" cy="9" r="1.500" fill="#14532d" /><path d="M21 11c5 0 9 3 9 8 0 3-2 5-3 6l1 3-4-1c-7 1-12-3-12-8s4-8 9-8z" fill="#e9e9e9" /><circle cx="18" cy="17" r="1.200" fill="#777" /><circle cx="24" cy="17" r="1.200" fill="#777" /></svg>` },
];

@customElement("app-root")
export class AppRoot extends LitElement {
  @state() private tab = "主页";

  static styles = css`
    :host { display: flex; flex-direction: column; height: 100vh; position: relative; overflow: hidden; color: #111; font: 15px/20px "Noto Sans CJK SC", "Noto Sans", sans-serif; }
    * { box-sizing: border-box; }
    button { margin: 0; padding: 0; border: 0; background: none; color: inherit; font: inherit; white-space: nowrap; }
    svg { display: block; flex: none; }

    .titlebar { display: flex; align-items: center; height: 29px; flex: none; padding-left: 2px; background: linear-gradient(90deg, #eef3fc, #eef3fc 45%, #eff5f8 65%, #eef3fc); }
    .titlebar h1 { flex: 1; margin: 0; font-size: 15px; font-weight: 400; font-family: "Noto Sans", "Noto Sans CJK SC", sans-serif; }
    .winbtn { display: grid; place-items: center; width: 58px; height: 28px; }
    .winbtn:last-child { width: 64px; }

    .menubar { display: flex; height: 31px; flex: none; background: #9da1a9; }
    .tab { padding: 0 15px; color: #fff; }
    .tab.file { padding: 0 20px; background: #2590c8; }
    .tab.on { background: #e0e3e8; color: #444; }
    .spacer { flex: 1; }
    .tools { display: flex; align-items: center; gap: 9px; padding-right: 7px; }
    .search { display: flex; align-items: center; gap: 8px; width: 150px; height: 26px; margin-right: -7px; padding-left: 7px; background: #fff; border-bottom: 1px solid #777; }
    .search input { width: 100px; padding: 0; border: 0; outline: 0; background: none; font: inherit; }
    .search input::placeholder { color: #777; opacity: 1; }
    .vline { width: 1px; height: 18px; background: #888c94; }
    .drop { display: flex; align-items: center; gap: 6px; }
    .caret { width: 0; height: 0; border: 3px solid transparent; border-top: 4px solid #777a80; border-bottom: 0; }
    .drop .caret { border-top-color: #dfe1e5; }

    .ribbon { display: grid; grid-template-columns: 214px 347px 158px 231px 265px 126px 56px 57px; height: 108px; flex: none; padding: 3px 0; background: #e0e3e8; }
    .group { display: flex; flex-direction: column; justify-content: space-between; border-right: 1px solid #aeb2b9; }
    .parts { display: flex; gap: 8px; padding-left: 10px; }
    .roomy .parts { gap: 11px; }
    .wide .parts { gap: 23px; padding-left: 17px; }
    .single .parts { justify-content: center; padding-left: 0; }
    .big { display: flex; flex-direction: column; align-items: center; align-self: flex-start; padding: 4px 2px 0; min-width: 34px; }
    .big .art { display: grid; place-items: center; height: 32px; width: 30px; margin-bottom: 6px; }
    .big .caret { margin-top: 7px; }
    .big:disabled { color: #8b8e94; }
    .small { display: flex; flex-direction: column; align-items: flex-start; }
    .small button { display: flex; align-items: center; gap: 4px; height: 28px; }
    .foot { display: flex; align-items: center; height: 18px; padding: 0 10px 0 8px; color: #6b6e75; white-space: nowrap; }
    .foot span { flex: 1; text-align: center; }

    .doctabs { display: flex; align-items: stretch; height: 24px; flex: none; background: #9da1a9; border-top: 1px solid #b4b7bd; border-bottom: 2px solid #85888f; }
    .doctab { display: flex; align-items: center; width: 300px; padding: 0 17px 0 12px; background: #e0e3e8; }
    .doctab span { flex: 1; text-align: center; }
    .doctab button { display: grid; place-items: center; width: 18px; height: 18px; border: 1px solid #d8553c; border-radius: 2px; background: #ee8963; }
    .doctabs .mini { display: grid; place-items: center; width: 18px; height: 20px; margin-right: 3px; border-radius: 3px; background: #fff; }
    .doctabs .mini:last-child { margin-right: 1px; }

    .desk { display: grid; grid-template-columns: 265fr 1420px 213fr 22px; flex: 1; min-height: 0; overflow: hidden; background: #27282d; }
    .page { grid-column: 2; overflow: hidden; border-left: 4px solid #dcdce6; border-right: 5px solid #8c8c8c; }
    .page score-sheet { border-right: 4px solid #d6d6de; }
    .scroll { grid-column: 4; background: #f0f0f0; padding: 70px 8px 0 7px; }
    .thumb { height: 280px; border-radius: 3px; background: #858585; }

    .status { display: flex; align-items: center; height: 26px; flex: none; padding-left: 1px; background: #f0f0f0; border-top: 1px solid #7d7f8b; border-bottom: 1px solid #b0b4ba; }
    .status .cell { padding: 0 10px; border-right: 1px solid #a0a0a0; height: 22px; line-height: 22px; }
    .status .lockbtn { width: 36px; height: 22px; display: grid; place-items: center; border: solid #a0a0a0; border-width: 0 1px; }
    .views { display: flex; gap: 1px; margin: 0 10px; }
    .views button { display: grid; place-items: center; width: 19px; height: 20px; border-radius: 3px; }
    .views .on { background: #c4e6fa; box-shadow: inset 0 0 0 1px #8ccbee; }
    .zoom { display: flex; align-items: center; margin-right: 11px; }
    .zoom span { margin-right: 8px; font-family: "Noto Sans", sans-serif; }
    .zoom input { appearance: none; width: 100px; height: 16px; margin: 0; background: linear-gradient(#8f8f9c, #8f8f9c) center / 100% 1px no-repeat; }
    .zoom input::-webkit-slider-thumb { appearance: none; width: 9px; height: 13px; border: 1px solid #8a5a9c; background: #e8c8f0; border-radius: 0 0 5px 5px; }

    .taskbar { display: grid; grid-template-columns: 1fr auto 1fr; align-items: center; height: 59px; flex: none; background: linear-gradient(90deg, #e2eff8 0, #e2eef8 18%, #d2e2fb 23%, #d7dcf6 34%, #d2e2fa 40%, #d5dcf4 50%, #d6e0f6 62%, #e0ebf8 78%, #e4eaf7 90%, #e2eff8 100%); }
    .tasks { grid-column: 2; display: flex; gap: 7px; }
    .tasks button { display: grid; place-items: center; position: relative; width: 48px; height: 48px; border-radius: 5px; }
    .tasks .active { background: #ebeef9; box-shadow: 0 1px 1px #c2c8dc; }
    .tasks .active::after, .tasks .running::after { content: ""; position: absolute; bottom: 0; width: 20px; height: 4px; border-radius: 2px; background: #0a78d4; }
    .tasks .running::after { width: 8px; background: #7d828c; }
    .tray { display: flex; align-items: center; justify-content: flex-end; gap: 10px; padding: 0 26px 3px 0; }
    .tray .ime { margin: 0 16px 0 14px; font-size: 18px; }
    .tray .brand { margin-right: 18px; }
    .clock { margin-left: 10px; font-family: "Open Sans", sans-serif; text-align: right; white-space: nowrap; }

    note-keypad { position: absolute; right: 49px; bottom: 60px; width: 120px; height: 207px; }
  `;

  private part(p: Big | Small) {
    if (p.kind === "big")
      return html`<button class="big" ?disabled=${p.disabled}>
        <span class="art">${ICONS[p.icon]}</span>${p.label}${p.menu ? html`<span class="caret"></span>` : nothing}
      </button>`;
    return html`<div class="small">${p.items.map((i) => html`<button>
      ${i.icon ? ICONS[i.icon] : nothing}${i.label}${i.menu ? html`<span class="caret"></span>` : nothing}
    </button>`)}</div>`;
  }

  render() {
    return html`
      <div class="titlebar">
        ${ICONS.appLogo}
        <h1>《祖国只有你最知道我的心》-6.20（0355）_jp - 您的试用期还有 29 天（共 30 天）。* - Sibelius</h1>
        <button class="winbtn" aria-label="最小化">${ICONS.minimize}</button>
        <button class="winbtn" aria-label="还原">${ICONS.restore}</button>
        <button class="winbtn" aria-label="关闭">${ICONS.close}</button>
      </div>

      <nav class="menubar">
        ${TABS.map((t, i) => html`<button class=${classMap({ tab: true, file: i === 0, on: t === this.tab })}
          @click=${() => { if (i) this.tab = t; }}>${t}</button>`)}
        <span class="spacer"></span>
        <div class="tools">
          <label class="search">${ICONS.search}<input type="search" aria-label="命令搜索" placeholder="命令搜索" /></label>
          <span class="vline"></span>
          <button aria-label="保存">${ICONS.save}</button>
          <button class="drop" aria-label="撤销">${ICONS.undo}<span class="caret"></span></button>
          <button class="drop" aria-label="重做">${ICONS.redo}<span class="caret"></span></button>
          <span class="vline"></span>
          <button aria-label="折叠功能区">${ICONS.up}</button>
          <button aria-label="帮助">${ICONS.help}</button>
        </div>
      </nav>

      <div class="ribbon">
        ${GROUPS.map((g) => html`<section class="group ${g.cls ?? ""}">
          <div class="parts">${g.parts.map((p) => this.part(p))}</div>
          <div class="foot"><span>${g.label}</span>${g.launcher ? html`<button aria-label="${g.label}选项">${ICONS.launcher}</button>` : nothing}</div>
        </section>`)}
      </div>

      <div class="doctabs">
        <div class="doctab"><span>完整乐谱</span><button aria-label="关闭标签">${icon(10, 10, svg`<path d="M1 1l8 8M9 1L1 9" stroke="#fff" stroke-width="2" />`)}</button></div>
        <span class="spacer"></span>
        <button class="mini" aria-label="新建标签">${icon(10, 10, svg`<path d="M5 0v10M0 5h10" stroke="#111" stroke-width="1.600" />`)}</button>
        <button class="mini" aria-label="标签列表">${icon(12, 12, svg`<path d="M1 1h10v2L9 6H3L1 3zM7 8h4l-2 3z" />`)}</button>
      </div>

      <main class="desk">
        <div class="page"><score-sheet></score-sheet></div>
        <div class="scroll"><div class="thumb"></div></div>
      </main>

      <footer class="status">
        ${["第 1/1 页", "小节: 45", "无选择", "实际音高", "聚焦谱行"].map((t) => html`<span class="cell">${t}</span>`)}
        <span class="spacer"></span>
        <button class="lockbtn" aria-label="锁定">${ICONS.lock}</button>
        <div class="views">${VIEW_ICONS.map((v, i) => html`<button class=${i ? "" : "on"} aria-label="视图 ${i + 1}">${v}</button>`)}</div>
        <div class="zoom">
          <span>147.00%</span>
          <button aria-label="缩小">${icon(17, 17, svg`<circle cx="8.500" cy="8.500" r="7.500" fill="#f6eefa" stroke="#5e2380" stroke-width="1.300" /><path d="M4 8.500h9" stroke="#5e2380" stroke-width="2" />`)}</button>
          <input type="range" min="0" max="100" value="68" aria-label="缩放" />
          <button aria-label="放大">${icon(17, 17, svg`<circle cx="8.500" cy="8.500" r="7.500" fill="#f6eefa" stroke="#3d1455" stroke-width="1.300" /><path d="M4 8.500h9M8.500 4v9" stroke="#3d1455" stroke-width="2" />`)}</button>
        </div>
      </footer>

      <div class="taskbar">
        <div class="tasks">${TASKS.map((t) => html`<button class=${t.cls ?? ""} aria-label=${t.name}>${t.art}</button>`)}</div>
        <div class="tray">
          <button aria-label="显示隐藏的图标">${icon(14, 14, svg`<path d="M1 10l6-6 6 6" fill="none" stroke="#111" stroke-width="1.600" />`)}</button>
          <span class="ime">中</span>
          <button class="brand" aria-label="助手">${icon(20, 20, svg`<circle cx="10" cy="10" r="10" fill="#0bc47c" /><path d="M8 15l2-9h2.500a2.500 2.500 0 0 1 0 5.500H4" fill="none" stroke="#fff" stroke-width="2.200" />`)}</button>
          ${icon(20, 16, svg`<path d="M1 6c5-6 13-6 18 0M4 9c3-4 9-4 12 0M7 12c2-2 4-2 6 0" fill="none" stroke="#111" stroke-width="1.400" /><circle cx="10" cy="14" r="1.600" />`)}
          ${icon(20, 16, svg`<path d="M1 6h3l5-4v12l-5-4H1z" fill="none" stroke="#111" stroke-width="1.200" /><path d="M13 5l6 6M19 5l-6 6" stroke="#111" stroke-width="1.200" />`)}
          ${icon(22, 20, svg`<path d="M6 4h11v3h2v4h-3l-3 4H3V9z" fill="#111" /><path d="M5 13l8-7h3M3 16h9" fill="none" stroke="#111" stroke-width="1.300" /><path d="M4 1L1 6h3l-1 5 4-6H4l2-4z" stroke="#e2edf8" stroke-width=".5" /><path d="M16 19l-5-5c0-4 4-4 5-1 1-3 5-3 5 1z" stroke="#e2edf8" />`)}
          <div class="clock"><div>6:12</div><div>2024-06-23</div></div>
          ${icon(18, 20, svg`<path d="M8 2c5 0 6 3 6 7v4l2 3H0l2-3V8c0-4 2-6 6-6z" /><path d="M5 17h6c0 3-6 3-6 0z" /><path d="M5 7h5l-5 6h5" fill="none" stroke="#fff" stroke-width="1.400" /><path d="M13 1h4l-4 5h4" fill="none" stroke="#111" stroke-width="1.400" />`)}
        </div>
      </div>

      <note-keypad></note-keypad>
    `;
  }
}
